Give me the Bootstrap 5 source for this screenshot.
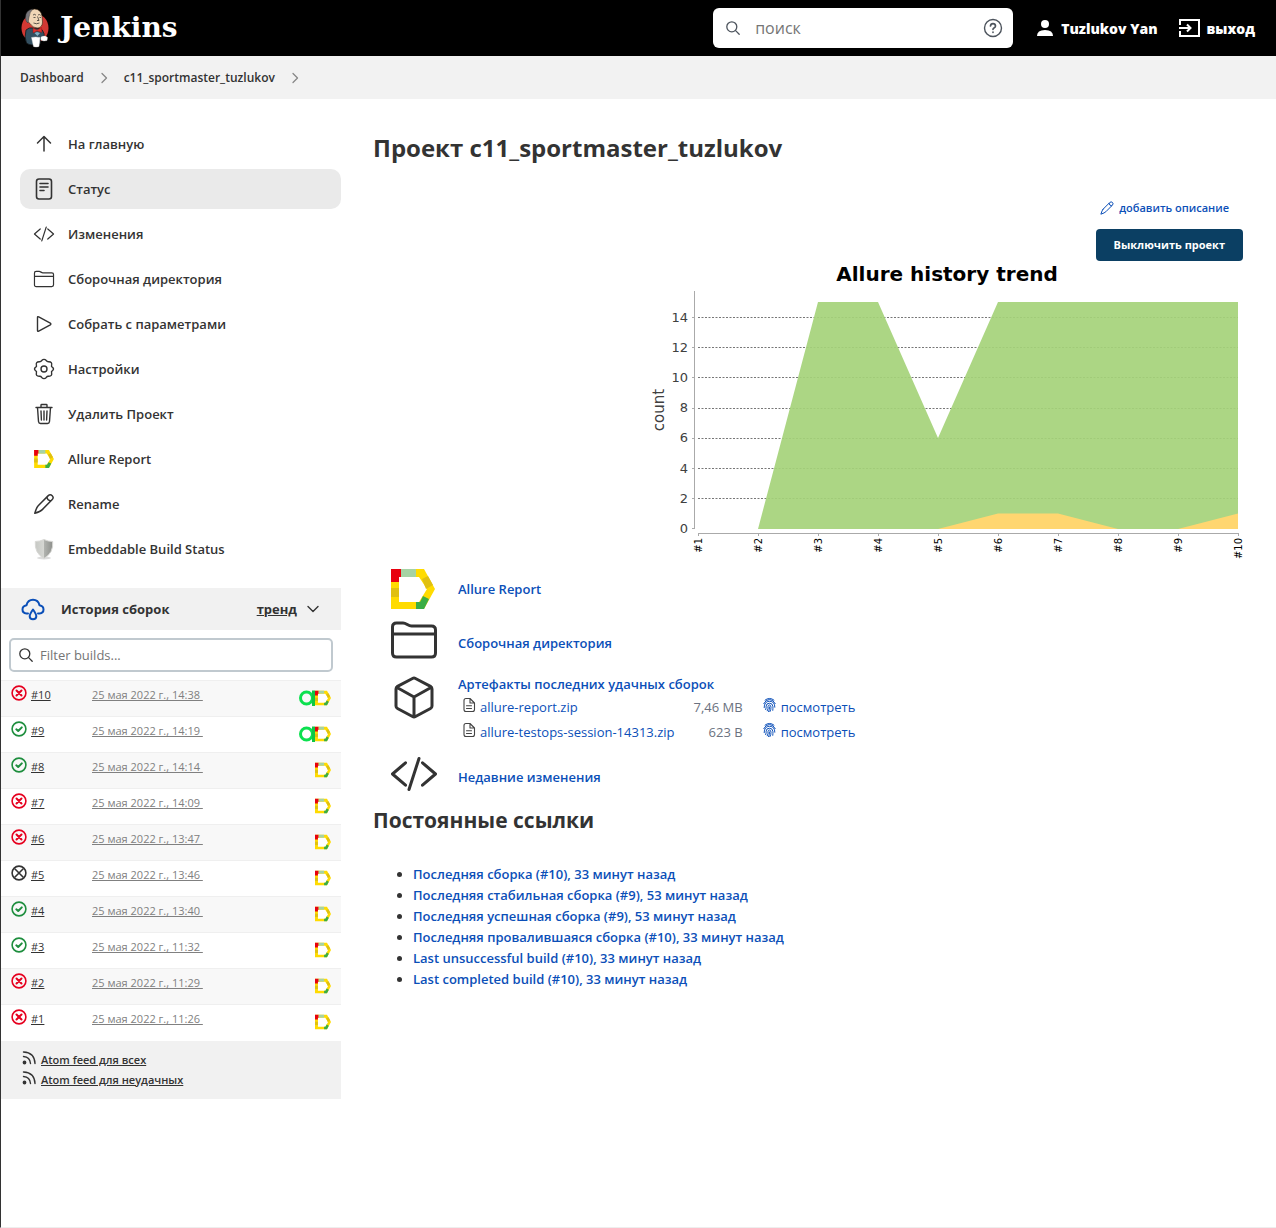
<!DOCTYPE html>
<html lang="ru">
<head>
<meta charset="utf-8">
<meta name="viewport" content="width=device-width, initial-scale=1">
<title>c11_sportmaster_tuzlukov [Jenkins]</title>
<link href="https://cdn.jsdelivr.net/npm/bootstrap@5.3.0/dist/css/bootstrap.min.css" rel="stylesheet">
<style>
:root { --ink: #333; --blue: #0b4fb8; --soft: #f1f1f1; }
body { font-family: "Open Sans", "Noto Sans", sans-serif; font-size: 14px; line-height: 21px; color: var(--ink); border-left: 1px solid #333; border-bottom: 1px solid #eee; min-height: 100vh; }
a { color: var(--blue); text-decoration: none; }
svg { flex: none; display: block; }
.line-ico { fill: none; stroke: currentColor; stroke-linecap: round; stroke-linejoin: round; }
.top-bar { height: 56px; background: #000; padding: 0 21px 0 19px; }
.top-bar a { color: #fff; font-weight: 800; }
.top-bar .brand-name { font: bold 28px/36px "DejaVu Serif", serif; margin-left: 10px; }
.top-bar .logout { gap: 6px; margin-left: 19px; }
.search-field { width: 300px; height: 40px; border-radius: 6px; background: #fff; padding: 0 10px 0 12px; color: #4d545d; }
.search-field input { font-size: 16px; padding: 0 0 0 14px; }
.search-field .help-link { color: #4d545d; }
.bare-input { border: 0; outline: 0; background: none; min-width: 0; flex: 1; color: var(--ink); }
.bare-input::placeholder { color: #757575; }
.crumbs { height: 43px; background: #f2f2f2; padding: 0 19px; font-size: 12px; }
.crumbs a { color: var(--ink); font-weight: 600; }
.crumbs svg { color: #888; margin: 0 15px; }
.side-col { width: 340px; flex: none; padding-top: 25px; }
.tasks { padding-left: 19px; gap: 5px; margin-bottom: 19px; }
.tasks a { height: 40px; border-radius: 10px; padding-left: 12px; gap: 12px; color: var(--ink); font-size: 13px; font-weight: 600; }
.tasks a.current { background: #eaeaea; }
.history-head { background: var(--soft); height: 42px; padding: 0 20px; font-size: 13px; }
.history-head a { color: var(--ink); }
.history-head .cloud { color: var(--blue); }
.history-head h2 { font-size: 13px; line-height: 21px; font-weight: 700; margin: 0 0 0 16px; }
.filter-field { margin: 8px; height: 34px; border: 2px solid #c0c9cf; border-radius: 5px; padding: 0 7px; }
.filter-field input { padding: 0 0 0 6px; font-size: 13px; }
.builds { font-size: 11px; line-height: 16px; margin: 0; }
.builds tr { height: 36px; border-top: 1px solid #efefef; }
.builds tr:nth-child(odd) { background: #f8f8f8; }
.builds td { padding: 0; vertical-align: top; }
.builds .num { padding: 4px 0 0 10px; width: 91px; }
.builds .num a { color: var(--ink); text-decoration: underline; padding-top: 2px; }
.builds .when { padding-top: 6px; }
.builds .when a { color: #808080; text-decoration: underline; }
.builds .tools { padding: 9px 10px 0 0; }
.feeds { background: var(--soft); padding: 9px 20px; font-size: 11px; font-weight: 600; line-height: 20px; }
.feeds a { color: var(--ink); gap: 4px; }
.feeds span { text-decoration: underline; }
.bad { color: #e6001f; } .good { color: #1e8e3e; } .aborted { color: #333; }
.main-col { padding: 32px 33px 0 32px; min-width: 0; }
h1 { font-size: 24px; line-height: 34px; font-weight: 700; margin: 0; }
.tools-col { margin-top: 32px; }
.describe { font-size: 11px; gap: 4px; padding-right: 14px; font-weight: 550; }
.btn-off { background: #0b3f63; color: #fff; font-size: 11px; line-height: 20px; font-weight: 700; padding: 6px 18px; border: 0; border-radius: 4px; margin-top: 11px; }
.btn-off:hover { background: #082f4a; color: #fff; }
.chart { max-width: 100%; height: auto; font-family: "DejaVu Sans", sans-serif; }
.shortcut { min-height: 54px; padding-left: 17px; gap: 20px; font-weight: 550; font-size: 13px; }
.shortcut > svg { width: 48px; }
.shortcut > svg.raised { margin-bottom: 6px; }
.artifacts { padding-bottom: 5px; }
.files td { padding: 2px 0; font-size: 13px; font-weight: 500; }
.files .size { color: #6b7280; font-weight: 400; padding: 2px 19px; text-align: right; }
.files a { gap: 4px; }
.files .sheet { color: #444; }
h3 { font-size: 21px; line-height: 32px; font-weight: 700; margin: 0 0 28px; }
.perma { margin: 0; padding-left: 40px; font-size: 13px; font-weight: 550; }
</style>
<script src="https://cdn.jsdelivr.net/npm/bootstrap@5.3.0/dist/js/bootstrap.bundle.min.js"></script>
</head>
<body>
<svg width="0" height="0" class="position-absolute" aria-hidden="true">
  <symbol id="arrow" viewBox="0 0 24 24"><path d="M5.500 11L12 4.500l6.500 6.500M12 5v14"/></symbol>
  <symbol id="doc" viewBox="0 0 24 24"><rect x="4.500" y="2" width="15" height="20" rx="2.500"/><path d="M8 6.500h8M8 10h8M8 13.500h4"/></symbol>
  <symbol id="code" viewBox="0 0 48 48"><path d="M15.500 12.800L2.500 24l13 11.200M32.500 12.800L45.500 24l-13 11.200M29 8.500l-10 31"/></symbol>
  <symbol id="folder" viewBox="0 0 48 48"><path d="M2.500 37V11q0-4 4-4H13c3.500 0 5 3 8.500 3h20q4 0 4 4v23q0 4-4 4h-35q-4 0-4-4zM2.500 18h43"/></symbol>
  <symbol id="play" viewBox="0 0 24 24"><path d="M5.500 5.500v13q0 1.200 1.200.6l11.600-6.300q1.200-.8 0-1.600L6.700 4.900q-1.200-.6-1.200.6z"/></symbol>
  <symbol id="gear" viewBox="0 0 24 24"><circle cx="12" cy="12" r="3"/><path d="M9.700 3.600Q12 1.200 14.300 3.600Q15.200 5 16.900 4.700Q20.300 4.800 19.600 8Q19 9.700 20.500 10.400Q22.500 12 20.500 13.600Q19 14.300 19.600 16Q20.300 19.200 16.900 19.300Q15.200 19 14.300 20.400Q12 22.800 9.700 20.400Q8.800 19 7.100 19.300Q3.700 19.200 4.400 16Q5 14.300 3.500 13.600Q1.500 12 3.500 10.400Q5 9.700 4.400 8Q3.700 4.800 7.100 4.700Q8.800 5 9.700 3.600z"/></symbol>
  <symbol id="trash" viewBox="0 0 24 24"><path d="M4 5.500h16M9 5.500V3.200q0-.7.7-.7h4.600q.7 0 .7.700v2.300M5.500 5.500l1 14q.2 2 2 2h7q1.800 0 2-2l1-14M9 9l.4 9M12 9v9M15 9l-.4 9"/></symbol>
  <symbol id="pencil" viewBox="0 0 24 24"><path d="M6.200 13.700L16 3.900q2.200-2.200 4.200-.2t-.2 4.100L10.300 17.600Q8.500 19.400 2.800 21.300Q4.500 15.400 6.200 13.700zM15 5q.3 3.400 3.900 3.900"/></symbol>
  <symbol id="allure" viewBox="0 0 44 40"><path fill="#ffdb00" d="M0 0h33l11 20-11 20H0z"/><path fill="#fff" d="M8 8h20l8 12-8 13H8z"/><path fill="#e8000f" d="M0 0h10v8H8v5H0z"/><path fill="#a6d3a4" d="M10 0h15v8H10z"/><path fill="#e0c010" d="M0 19h8v9H0zM31 10l6-3 5 9-7 4z"/><path fill="#3aad45" d="M25 33h4l3-6 6 3-5 10h-8z"/></symbol>
  <symbol id="testops" viewBox="0 0 16 16"><circle cx="7.500" cy="8" r="6" fill="none" stroke="#0ce04f" stroke-width="3"/><path d="M14.500 .5V16" stroke="#10c545" stroke-width="3"/></symbol>
  <symbol id="lens" viewBox="0 0 16 16"><circle cx="6.800" cy="6.800" r="5"/><path d="M10.600 10.600l3.600 3.600"/></symbol>
  <symbol id="chev" viewBox="0 0 10 12"><path d="M3 1.500L7.500 6 3 10.500"/></symbol>
  <symbol id="fail" viewBox="0 0 16 16"><circle cx="8" cy="8" r="6.900"/><path stroke-width="2" d="M5.500 5.500l5 5M10.500 5.500l-5 5"/></symbol>
  <symbol id="ok" viewBox="0 0 16 16"><circle cx="8" cy="8" r="6.900"/><path stroke-width="2" d="M5.300 8.300l1.900 1.700 3.600-3.600"/></symbol>
  <symbol id="stop" viewBox="0 0 16 16"><circle cx="8" cy="8" r="6.900"/><path d="M4 4l8 8M12 4l-8 8"/></symbol>
  <symbol id="rss" viewBox="0 0 16 16"><path d="M2.500 2Q13.500 2.500 14 13.500M2.500 6.500Q9 7 9.500 13.500"/><circle cx="3.500" cy="12.500" r="1.200" fill="currentColor"/></symbol>
  <symbol id="file" viewBox="0 0 14 16"><path d="M2 12.500V3.500q0-2 2-2h4L12.500 6v6.500q0 2-2 2H4q-2 0-2-2zM8 1.500V6h4.500M4.500 8.800h5M4.500 11.500h5"/></symbol>
  <symbol id="finger" viewBox="0 0 16 18"><path d="M3 3.500Q8-.5 13 3.500M1.500 7.500Q4 2.800 8 2.800t6.500 4.700M2 12Q2 4.800 8 4.800t6 6.700M3.700 14.200Q4.500 12 4.200 10.300Q4.300 7 8 7t3.900 4q0 2-.2 4M5.500 15.500Q6.800 13 6.300 10.800Q6.500 9 8 9t1.700 2.500q.1 3-1.200 5M8 11.200q.2 3-1 5.300"/></symbol>
</svg>

<header class="top-bar d-flex align-items-center">
  <a href="#" class="d-flex align-items-center me-auto">
    <svg width="30" height="40" viewBox="0 0 30 40" aria-hidden="true">
      <ellipse cx="15" cy="20" rx="13.500" ry="14.500" fill="#d33833"/>
      <path fill="#335061" stroke="#111" stroke-width=".7" d="M6 22q3-3 7-2l6 .5q4 .5 5 5l.5 5-4 1v4q-4 2-7 1.500-5 0-7-2-2.500-6-.5-13z"/>
      <path fill="#f0d6b7" stroke="#321" stroke-width=".6" d="M7 9Q8 1.500 14.500 1q6.500.300 7.500 7l.5 6q0 5-4.500 6-5 .5-8-4.500-3.500-1.500-3-6.500z"/>
      <path fill="#77757a" stroke="#333" stroke-width=".5" d="M13 1Q5.500 2 5.500 9.500q0 4.500 2.500 5.500l.8-5q.8-6.500 4.200-9z"/>
      <path fill="none" stroke="#222" stroke-width=".7" d="M13 7q2-1.500 3 .3M18 7q1.500-1 2.700.3M17.500 8.500l1.500 4h-2M13.500 15q3 1.500 6 0M13.500 9.500h2M19.500 9.500h1.500"/>
      <path fill="#e0302c" stroke="#811" stroke-width=".4" d="M13 20l4 2 4.500-2.500.5 5-5-1.500-4 2z"/>
      <path fill="#81b0c4" d="M14.500 25l2.500-1 3 1-2.500 3z"/>
      <path fill="#fff" stroke="#ddd" stroke-width=".4" d="M11.500 29.500q4-1 8.500 0l-1 9q-3 1-5.500 0zM21 29q4-2 6.500.5l-.5 3q-3.500 1-6-.5z"/>
    </svg>
    <span class="brand-name">Jenkins</span>
  </a>
  <form class="search-field d-flex align-items-center" role="search">
    <svg class="line-ico" width="16" height="16" stroke-width="1.300"><use href="#lens"/></svg>
    <input class="bare-input" type="search" placeholder="поиск" aria-label="поиск">
    <a class="help-link" href="#" aria-label="Справка"><svg class="line-ico" width="20" height="20" viewBox="0 0 20 20" stroke-width="1.400"><circle cx="10" cy="10" r="8.500"/><path stroke-width="1.700" d="M7.500 8q.2-2.300 2.500-2.300T12.500 8q0 1.300-1.500 2-1 .6-1 1.300M10 14.200v.1"/></svg></a>
  </form>
  <a href="#" class="d-flex align-items-center ms-4 gap-2">
    <svg width="16" height="18" viewBox="0 0 16 18" fill="#fff"><circle cx="8" cy="5" r="4"/><path d="M0 17q0-6 8-6t8 6z"/></svg>Tuzlukov Yan</a>
  <a href="#" class="logout d-flex align-items-center">
    <svg width="24" height="20" viewBox="0 0 24 20" fill="none" stroke="#fff" stroke-width="2"><path d="M3 7V2h19v16H3v-5M2 10h11M10 6.500l3.500 3.500-3.500 3.500"/></svg>выход</a>
</header>

<nav class="crumbs d-flex align-items-center" aria-label="Навигация">
  <a href="#">Dashboard</a>
  <svg class="line-ico" width="10" height="12" stroke-width="1.300"><use href="#chev"/></svg>
  <a href="#">c11_sportmaster_tuzlukov</a>
  <svg class="line-ico" width="10" height="12" stroke-width="1.300"><use href="#chev"/></svg>
</nav>

<div class="d-flex">
  <aside class="side-col">
    <nav class="tasks d-flex flex-column">
      <a href="#" class="d-flex align-items-center"><svg class="line-ico" width="24" height="24" stroke-width="1.500"><use href="#arrow"/></svg>На главную</a>
      <a href="#" class="d-flex align-items-center current"><svg class="line-ico" width="24" height="24" stroke-width="1.600"><use href="#doc"/></svg>Статус</a>
      <a href="#" class="d-flex align-items-center"><svg class="line-ico" width="24" height="24" viewBox="-3 -3 54 54" stroke-width="2.800"><use href="#code" width="48" height="48"/></svg>Изменения</a>
      <a href="#" class="d-flex align-items-center"><svg class="line-ico" width="24" height="24" viewBox="-3 -3 54 54" stroke-width="2.800"><use href="#folder" width="48" height="48"/></svg>Сборочная директория</a>
      <a href="#" class="d-flex align-items-center"><svg class="line-ico" width="24" height="24" stroke-width="1.400"><use href="#play"/></svg>Собрать с параметрами</a>
      <a href="#" class="d-flex align-items-center"><svg class="line-ico" width="24" height="24" stroke-width="1.400"><use href="#gear"/></svg>Настройки</a>
      <a href="#" class="d-flex align-items-center"><svg class="line-ico" width="24" height="24" stroke-width="1.400"><use href="#trash"/></svg>Удалить Проект</a>
      <a href="#" class="d-flex align-items-center"><svg width="24" height="18"><use href="#allure"/></svg>Allure Report</a>
      <a href="#" class="d-flex align-items-center"><svg class="line-ico" width="24" height="24" stroke-width="1.500"><use href="#pencil"/></svg>Rename</a>
      <a href="#" class="d-flex align-items-center"><svg width="24" height="24" viewBox="0 0 24 24"><defs><linearGradient id="steel"><stop offset="0" stop-color="#c6c8c4"/><stop offset=".5" stop-color="#d6d7d3"/><stop offset=".5" stop-color="#b2b4b0"/><stop offset="1" stop-color="#8d8f8b"/></linearGradient></defs><ellipse cx="12" cy="21" rx="7" ry="1.500" fill="#ddd"/><path d="M12 2.500q4 2 8.700 2 1 11.500-8.700 17Q2.300 16 3.300 4.500q4.700 0 8.700-2z" fill="url(#steel)" stroke="#d8d8d5"/></svg>Embeddable Build Status</a>
    </nav>

    <div class="history-head d-flex align-items-center">
      <svg class="line-ico cloud" width="24" height="24" viewBox="0 0 24 24" stroke-width="2"><path d="M7 16.500H5.500q-4-.4-4-4t4-4.300Q6.800 2.800 12 2.800t6.500 5.400q4 .7 4 4.300t-4 4H17M12 12.500q-3.300 4.500-3.300 6.700 0 3 3.300 3t3.300-3q0-2.200-3.300-6.700z"/></svg>
      <h2>История сборок</h2>
      <a href="#" class="ms-auto fw-bold text-decoration-underline">тренд</a>
      <svg class="line-ico ms-2" width="16" height="16" viewBox="0 0 16 16" stroke-width="1.400"><path d="M3 5.500l5 5 5-5"/></svg>
    </div>
    <div class="filter-field d-flex align-items-center">
      <svg class="line-ico" width="16" height="16" stroke-width="1.300"><use href="#lens"/></svg>
      <input class="bare-input" type="search" placeholder="Filter builds..." aria-label="Filter builds">
    </div>
    <table class="builds w-100">
      <tbody>
      <tr><td class="num"><div class="d-flex gap-1"><svg class="line-ico bad" width="16" height="16" stroke-width="1.600"><use href="#fail"/></svg><a href="#">#10</a></div></td><td class="when"><a href="#">25 мая 2022 г., 14:38&nbsp;</a></td><td class="tools"><div class="d-flex justify-content-end"><svg width="16" height="16"><use href="#testops"/></svg><svg width="16" height="16"><use href="#allure"/></svg></div></td></tr>
      <tr><td class="num"><div class="d-flex gap-1"><svg class="line-ico good" width="16" height="16" stroke-width="1.600"><use href="#ok"/></svg><a href="#">#9</a></div></td><td class="when"><a href="#">25 мая 2022 г., 14:19&nbsp;</a></td><td class="tools"><div class="d-flex justify-content-end"><svg width="16" height="16"><use href="#testops"/></svg><svg width="16" height="16"><use href="#allure"/></svg></div></td></tr>
      <tr><td class="num"><div class="d-flex gap-1"><svg class="line-ico good" width="16" height="16" stroke-width="1.600"><use href="#ok"/></svg><a href="#">#8</a></div></td><td class="when"><a href="#">25 мая 2022 г., 14:14&nbsp;</a></td><td class="tools"><div class="d-flex justify-content-end"><svg width="16" height="16"><use href="#allure"/></svg></div></td></tr>
      <tr><td class="num"><div class="d-flex gap-1"><svg class="line-ico bad" width="16" height="16" stroke-width="1.600"><use href="#fail"/></svg><a href="#">#7</a></div></td><td class="when"><a href="#">25 мая 2022 г., 14:09&nbsp;</a></td><td class="tools"><div class="d-flex justify-content-end"><svg width="16" height="16"><use href="#allure"/></svg></div></td></tr>
      <tr><td class="num"><div class="d-flex gap-1"><svg class="line-ico bad" width="16" height="16" stroke-width="1.600"><use href="#fail"/></svg><a href="#">#6</a></div></td><td class="when"><a href="#">25 мая 2022 г., 13:47&nbsp;</a></td><td class="tools"><div class="d-flex justify-content-end"><svg width="16" height="16"><use href="#allure"/></svg></div></td></tr>
      <tr><td class="num"><div class="d-flex gap-1"><svg class="line-ico aborted" width="16" height="16" stroke-width="1.600"><use href="#stop"/></svg><a href="#">#5</a></div></td><td class="when"><a href="#">25 мая 2022 г., 13:46&nbsp;</a></td><td class="tools"><div class="d-flex justify-content-end"><svg width="16" height="16"><use href="#allure"/></svg></div></td></tr>
      <tr><td class="num"><div class="d-flex gap-1"><svg class="line-ico good" width="16" height="16" stroke-width="1.600"><use href="#ok"/></svg><a href="#">#4</a></div></td><td class="when"><a href="#">25 мая 2022 г., 13:40&nbsp;</a></td><td class="tools"><div class="d-flex justify-content-end"><svg width="16" height="16"><use href="#allure"/></svg></div></td></tr>
      <tr><td class="num"><div class="d-flex gap-1"><svg class="line-ico good" width="16" height="16" stroke-width="1.600"><use href="#ok"/></svg><a href="#">#3</a></div></td><td class="when"><a href="#">25 мая 2022 г., 11:32&nbsp;</a></td><td class="tools"><div class="d-flex justify-content-end"><svg width="16" height="16"><use href="#allure"/></svg></div></td></tr>
      <tr><td class="num"><div class="d-flex gap-1"><svg class="line-ico bad" width="16" height="16" stroke-width="1.600"><use href="#fail"/></svg><a href="#">#2</a></div></td><td class="when"><a href="#">25 мая 2022 г., 11:29&nbsp;</a></td><td class="tools"><div class="d-flex justify-content-end"><svg width="16" height="16"><use href="#allure"/></svg></div></td></tr>
      <tr><td class="num"><div class="d-flex gap-1"><svg class="line-ico bad" width="16" height="16" stroke-width="1.600"><use href="#fail"/></svg><a href="#">#1</a></div></td><td class="when"><a href="#">25 мая 2022 г., 11:26&nbsp;</a></td><td class="tools"><div class="d-flex justify-content-end"><svg width="16" height="16"><use href="#allure"/></svg></div></td></tr>
      </tbody>
    </table>
    <div class="feeds">
      <a href="#" class="d-flex"><svg class="line-ico" width="16" height="16" stroke-width="1.400"><use href="#rss"/></svg><span>Atom feed для всех</span></a>
      <a href="#" class="d-flex"><svg class="line-ico" width="16" height="16" stroke-width="1.400"><use href="#rss"/></svg><span>Atom feed для неудачных</span></a>
    </div>
  </aside>

  <main class="main-col flex-grow-1">
    <h1>Проект c11_sportmaster_tuzlukov</h1>
    <div class="tools-col d-flex flex-column align-items-end">
      <a href="#" class="describe d-flex align-items-center"><svg class="line-ico" width="16" height="16" stroke-width="1.500"><use href="#pencil"/></svg>добавить описание</a>
      <button type="button" class="btn btn-off">Выключить проект</button>
      <svg class="chart" width="600" height="301" viewBox="643 261 600 301" role="img" aria-label="Allure history trend">
        <text x="947" y="281" text-anchor="middle" font-size="20" font-weight="bold">Allure history trend</text>
        <g stroke="#777" stroke-dasharray="2 1.500"><path d="M698 317.500h540M698 347.500h540M698 377.500h540M698 408.500h540M698 438.500h540M698 468.500h540M698 498.500h540"/></g>
        <path fill="#a5d279" fill-opacity=".92" d="M758 529L818 302h60l60 136 60-136h240v227z"/>
        <path fill="#ffd670" d="M938 529l60-15.500h60l60 15.500zM1178 529l60-15.500V529z"/>
        <path fill="none" stroke="#aaa" d="M694.500 291v238M692 317.500h2M692 347.500h2M692 377.500h2M692 408.500h2M692 438.500h2M692 468.500h2M692 498.500h2M692 528.500h2M698 533.500h541M698.500 533v3M758.500 533v3M818.500 533v3M878.500 533v3M938.500 533v3M998.500 533v3M1058.500 533v3M1118.500 533v3M1178.500 533v3M1238.500 533v3"/>
        <g font-size="13" fill="#404040" text-anchor="end"><text x="688" y="322">14</text><text x="688" y="352">12</text><text x="688" y="382">10</text><text x="688" y="412">8</text><text x="688" y="442">6</text><text x="688" y="473">4</text><text x="688" y="503">2</text><text x="688" y="533">0</text></g>
        <text transform="translate(664 410) rotate(-90)" text-anchor="middle" font-size="15" fill="#404040">count</text>
        <g font-size="10" text-anchor="end"><text transform="translate(702 538) rotate(-90)">#1</text><text transform="translate(762 538) rotate(-90)">#2</text><text transform="translate(822 538) rotate(-90)">#3</text><text transform="translate(882 538) rotate(-90)">#4</text><text transform="translate(942 538) rotate(-90)">#5</text><text transform="translate(1002 538) rotate(-90)">#6</text><text transform="translate(1062 538) rotate(-90)">#7</text><text transform="translate(1122 538) rotate(-90)">#8</text><text transform="translate(1182 538) rotate(-90)">#9</text><text transform="translate(1242 538) rotate(-90)">#10</text></g>
      </svg>
    </div>

    <div class="shortcut d-flex align-items-center"><svg height="40" viewBox="0 0 48 40"><use href="#allure" x="1" width="44" height="40"/></svg><a href="#">Allure Report</a></div>
    <div class="shortcut d-flex align-items-center"><svg class="line-ico raised" height="48" stroke-width="3"><use href="#folder"/></svg><a href="#">Сборочная директория</a></div>
    <div class="shortcut artifacts d-flex">
      <svg class="line-ico mt-1" height="48" viewBox="0 0 48 48" stroke-width="3"><path d="M22.500 4.500L7.500 12.300Q6 13.200 6 15v17q0 1.700 1.500 2.500l15 8q1.500.8 3 0l15-8Q42 33.700 42 32V15q0-1.800-1.500-2.700l-15-7.800q-1.500-.8-3 0zM7 13.500l17 9.500 17-9.500M24 23v19"/></svg>
      <div class="pt-1">
        <a href="#">Артефакты последних удачных сборок</a>
        <table class="files ms-1"><tbody>
          <tr><td><a href="#" class="d-flex"><svg class="line-ico sheet" width="14" height="16" stroke-width="1.100"><use href="#file"/></svg>allure-report.zip</a></td><td class="size">7,46 MB</td><td><a href="#" class="d-flex"><svg class="line-ico" width="15" height="16" stroke-width="1.100"><use href="#finger"/></svg>посмотреть</a></td></tr>
          <tr><td><a href="#" class="d-flex"><svg class="line-ico sheet" width="14" height="16" stroke-width="1.100"><use href="#file"/></svg>allure-testops-session-14313.zip</a></td><td class="size">623 B</td><td><a href="#" class="d-flex"><svg class="line-ico" width="15" height="16" stroke-width="1.100"><use href="#finger"/></svg>посмотреть</a></td></tr>
        </tbody></table>
      </div>
    </div>
    <div class="shortcut d-flex align-items-center"><svg class="line-ico raised" height="48" stroke-width="3"><use href="#code"/></svg><a href="#">Недавние изменения</a></div>

    <h3>Постоянные ссылки</h3>
    <ul class="perma">
      <li><a href="#">Последняя сборка (#10), 33 минут назад</a></li>
      <li><a href="#">Последняя стабильная сборка (#9), 53 минут назад</a></li>
      <li><a href="#">Последняя успешная сборка (#9), 53 минут назад</a></li>
      <li><a href="#">Последняя провалившаяся сборка (#10), 33 минут назад</a></li>
      <li><a href="#">Last unsuccessful build (#10), 33 минут назад</a></li>
      <li><a href="#">Last completed build (#10), 33 минут назад</a></li>
    </ul>
  </main>
</div>
</body>
</html>
